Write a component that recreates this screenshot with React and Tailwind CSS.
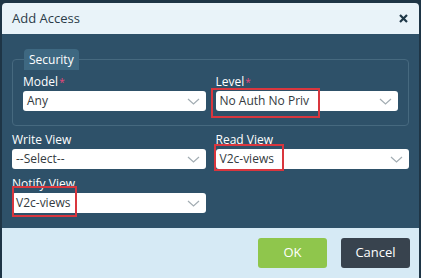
import React from 'react';

const font = { fontFamily: '"Open Sans", "Noto Sans", sans-serif' };

// thin chevron used by every select
const Chevron = () => (
  <svg width="13" height="7" viewBox="0 0 13 7" className="shrink-0">
    <path d="M1 1l5.5 5 5.5-5" fill="none" stroke="#a3adb3" strokeWidth="1.2" />
  </svg>
);

const Select = ({ value, mark }) => (
  <div className="relative h-[20px] bg-white rounded-[3px] flex items-center justify-between pl-[4px] pr-[6px]">
    <span className="text-[12px] leading-none text-[#333a40]">{value}</span>
    <Chevron />
    {mark && <div className={`absolute border-2 border-[#d9363e] pointer-events-none ${mark}`}></div>}
  </div>
);

const Label = ({ children, required }) => (
  <div className="text-[12px] leading-[16px] text-white mb-[1px]">
    {children}
    {required && <span className="text-[#e8467a] text-[10px] align-top ml-[1px]">*</span>}
  </div>
);

export default function App() {
  return (
    <div style={font} className="w-[421px] h-[278px] bg-[#1e3546] pt-[3px] pl-[2px] pr-[2px] overflow-hidden">
      <div className="h-full flex flex-col rounded-t-[4px] overflow-hidden">
        <header className="h-[31px] shrink-0 bg-[#e9f3f9] flex items-center justify-between pl-[10px] pr-[11px]">
          <h1 className="text-[13px] text-[#2b3c48]">Add Access</h1>
          <svg width="9" height="9" viewBox="0 0 9 9">
            <path d="M1 1l7 7M8 1l-7 7" stroke="#1f3848" strokeWidth="2.2" />
          </svg>
        </header>

        <main className="h-[194px] shrink-0 bg-[#2e5169] px-[10px] pt-[15px]">
          <fieldset className="border border-[#46697f] rounded-[4px] pl-[10px] pr-[10px] pt-[4px] pb-[14px]">
            <legend className="ml-[1px] px-[5px] h-[21px] leading-[21px] bg-[#3e6881] rounded-t-[4px] text-[12px] text-white">
              Security
            </legend>
            <div className="grid grid-cols-2 gap-x-[10px]">
              <div>
                <Label required>Model</Label>
                <Select value="Any" />
              </div>
              <div>
                <Label required>Level</Label>
                <Select value="No Auth No Priv" mark="-left-[5px] -top-[3px] w-[109px] h-[30px]" />
              </div>
            </div>
          </fieldset>

          <div className="grid grid-cols-2 gap-x-[10px] mt-[6px]">
            <div>
              <Label>Write View</Label>
              <Select value="--Select--" />
            </div>
            <div>
              <Label>Read View</Label>
              <Select value="V2c-views" mark="-left-[2px] -top-[5px] w-[70px] h-[27px]" />
            </div>
            <div className="mt-[7px]">
              <Label>Notify View</Label>
              <Select value="V2c-views" mark="left-0 -top-[7px] w-[65px] h-[31px]" />
            </div>
          </div>
        </main>

        <footer className="flex-1 bg-[#d6eaf5] flex items-center justify-end gap-[14px] pr-[9px]">
          <button className="w-[69px] h-[30px] rounded-[3px] bg-[#8fc64c] text-white text-[13px]">OK</button>
          <button className="w-[69px] h-[30px] rounded-[3px] bg-[#38434e] text-white text-[13px]">Cancel</button>
        </footer>
      </div>
    </div>
  );
}
